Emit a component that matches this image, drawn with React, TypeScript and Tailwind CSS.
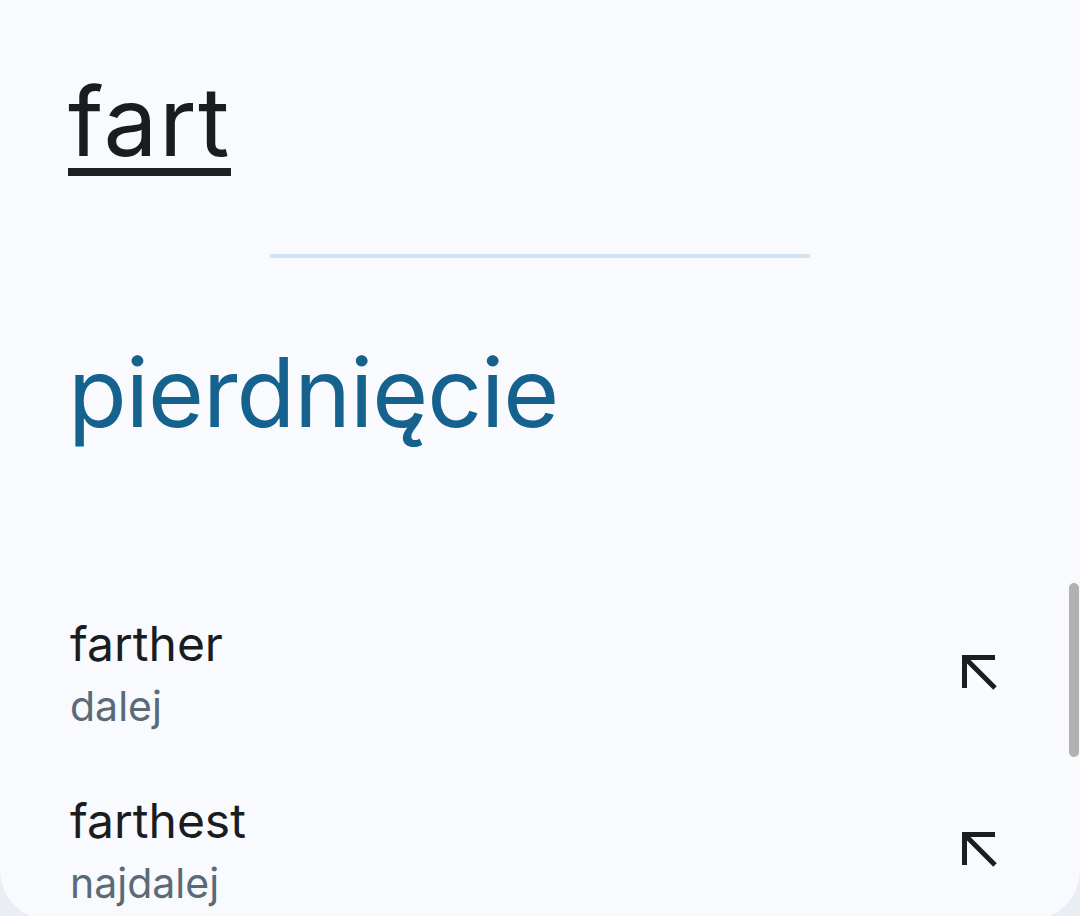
import React from "react";

const ArrowNorthWest = () => (
  <svg width="36" height="36" viewBox="0 0 36 36" fill="none" stroke="#1c1d20" strokeWidth="5" strokeLinecap="butt" strokeLinejoin="miter">
    <path d="M3.5 34V3.5H34" />
    <path d="M3.5 3.5L34 34" />
  </svg>
);

const related = [
  { word: "farther", translation: "dalej" },
  { word: "farthest", translation: "najdalej" },
];

export default function App() {
  return (
    <div className="relative h-[916px] w-[1080px] overflow-hidden bg-[#e9eef6]" style={{ fontFamily: "Inter, 'Open Sans', sans-serif" }}>
      <div className="h-[921px] rounded-b-[52px] bg-[#f8fafd] pl-[68px] pr-[83px] pt-[74px]">
        <div className="w-fit border-b-8 border-[#1f2023] text-[96px] leading-[94px] tracking-[1.5px] text-[#1b1c1e]">
          fart
        </div>

        <div className="mt-[78px] -ml-[68px] -mr-[83px] flex justify-center">
          <div className="h-[4px] w-[540px] bg-[#d3e3f1]" />
        </div>

        <div className="mt-[86px] text-[96px] leading-none tracking-[-1px] text-[#15628f]">
          pierdnięcie
        </div>

        <div className="mt-[176px] flex flex-col gap-[63px]">
          {related.map((item) => (
            <div key={item.word} className="flex items-start justify-between pl-[2px]">
              <div className="flex flex-col">
                <span className="text-[48px] leading-[56px] text-[#1b1c1e]">{item.word}</span>
                <span className="mt-[10px] text-[41px] leading-[48px] text-[#5b6a77]">{item.translation}</span>
              </div>
              <div className="mt-[38px]">
                <ArrowNorthWest />
              </div>
            </div>
          ))}
        </div>
      </div>

      <div className="absolute right-[1px] top-[583px] h-[174px] w-[10px] rounded-full bg-[#b1b1b1]" />
    </div>
  );
}
